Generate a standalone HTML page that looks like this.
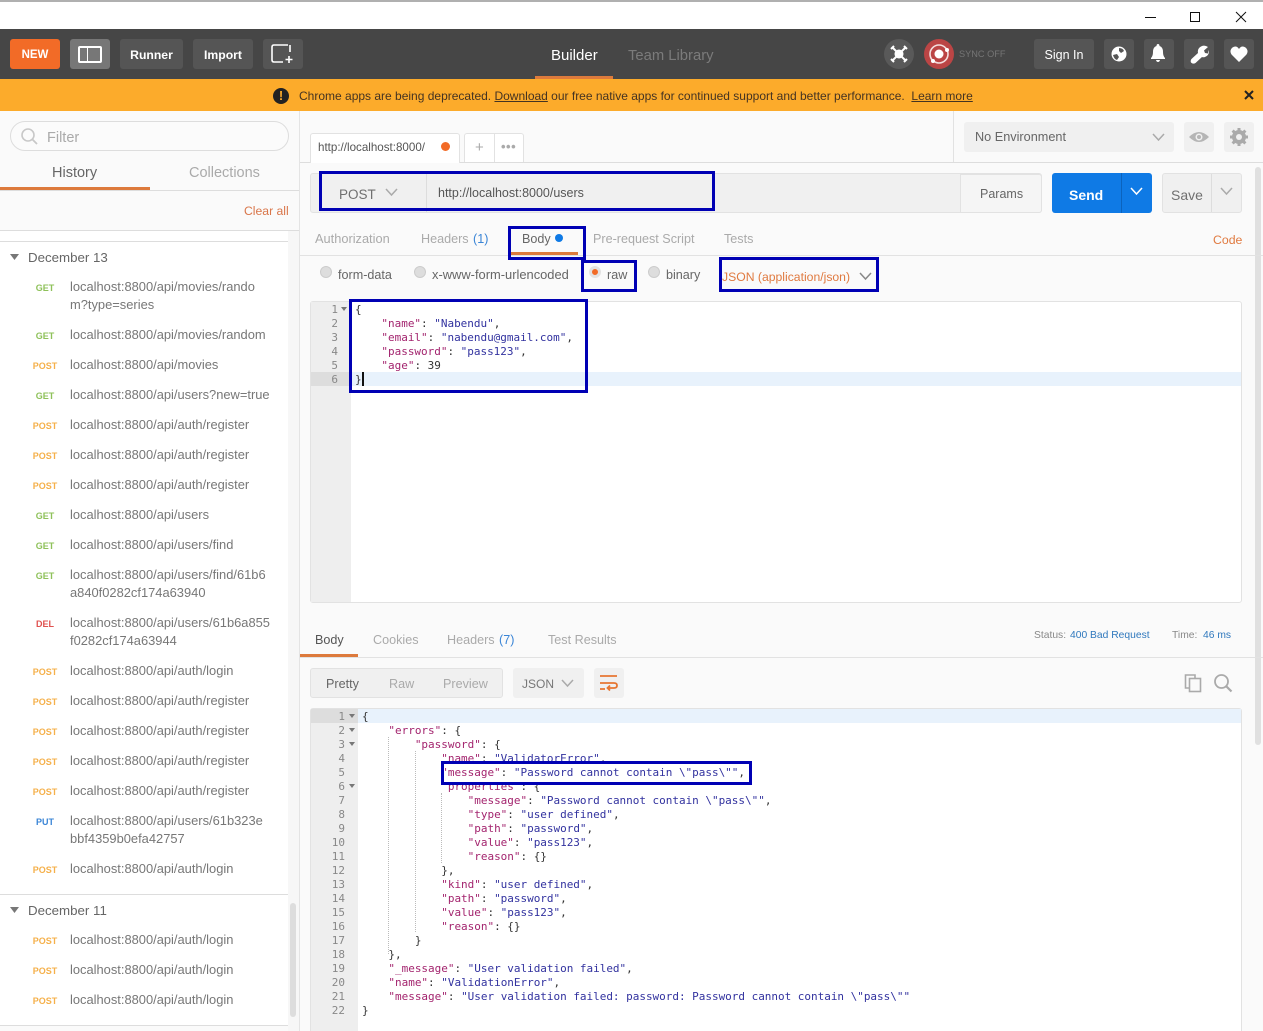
<!DOCTYPE html>
<html><head><meta charset="utf-8"><style>
html,body{margin:0;padding:0;width:1263px;height:1031px;overflow:hidden;background:#fff}
body{position:relative;font-family:"Liberation Sans",sans-serif;font-size:12.600px;color:#666}
.b{position:absolute;box-sizing:border-box}
.t{position:absolute;white-space:pre;line-height:18px}
.hb{background:#555;border-radius:3px;color:#fff;font-weight:bold;text-align:center;line-height:32px;top:39px;height:30px;font-size:12.200px}
.m{position:absolute;width:40px;left:25px;text-align:center;font-size:9px;font-weight:bold;line-height:14px;margin-top:2px}
.g{color:#8ec15a}.p{color:#f5b04a}.d{color:#e0524f}.u{color:#3a85d6}
.s{position:absolute;left:70px;white-space:pre;line-height:18px;color:#777;font-size:12.900px}
.r{position:absolute;border:3px solid #0000b4;box-sizing:border-box}
pre{position:absolute;margin:0;font-family:"DejaVu Sans Mono",monospace;font-size:11px;line-height:14px;color:#333;letter-spacing:-.02px}
i{font-style:normal;color:#a3246e}em{font-style:normal;color:#32329f}
.ln{color:#888;text-align:right}
.rad{position:absolute;width:12px;height:12px;border-radius:50%;background:#ddd;border:1px solid #ccc;box-sizing:border-box}
.dg{position:absolute;width:0;border-left:1px dotted #bbb}
</style></head><body>

<!-- title bar -->
<div class="b" style="left:0;top:0;width:1263px;height:2px;background:#b0b0b0"></div>
<div class="b" style="left:1145px;top:17px;width:11px;height:1px;background:#111"></div>
<div class="b" style="left:1190px;top:12px;width:10px;height:10px;border:1px solid #111"></div>
<svg class="b" style="left:1235px;top:11px" width="12" height="12"><path d="M1 1L11 11M11 1L1 11" stroke="#111" stroke-width="1"/></svg>

<!-- header -->
<div class="b" style="left:0;top:29px;width:1263px;height:50px;background:#464646"></div>
<div class="b hb" style="left:10px;width:50px;background:#f26b27;font-size:11.500px">NEW</div>
<div class="b hb" style="left:70px;width:40px;background:#777"></div>
<div class="b" style="left:78px;top:46px;width:24px;height:17px;border:2px solid #fff;border-radius:2px"></div>
<div class="b" style="left:87px;top:46px;width:1px;height:17px;background:#fff"></div>
<div class="b hb" style="left:120px;width:63px">Runner</div>
<div class="b hb" style="left:193px;width:60px">Import</div>
<div class="b hb" style="left:263px;width:40px"></div>
<svg class="b" style="left:270px;top:43px" width="26" height="22"><path d="M18 2H4Q2 2 2 4V17Q2 19 4 19H13M20 2V9" fill="none" stroke="#fff" stroke-width="1.6"/><path d="M19 13V20M15.500 16.500H22.500" stroke="#fff" stroke-width="1.600"/></svg>

<div class="t" style="left:551px;top:47px;color:#fff;font-size:15px">Builder</div>
<div class="b" style="left:535px;top:76px;width:78px;height:3px;background:#dd7a3c"></div>
<div class="t" style="left:628px;top:47px;color:#7b7b7b;font-size:14.800px">Team Library</div>

<div class="b" style="left:884px;top:39px;width:30px;height:30px;border-radius:50%;background:#595959"></div>
<svg class="b" style="left:889px;top:44px" width="20" height="20"><circle cx="10" cy="10" r="4.500" fill="#fff"/><path d="M2 5L5 2M3 3L17 17M15 18L18 15M2 15L5 18M3 17L17 3M15 2L18 5" stroke="#fff" stroke-width="2"/></svg>
<div class="b" style="left:924px;top:39px;width:30px;height:30px;border-radius:50%;background:#bb4545"></div>
<svg class="b" style="left:924px;top:39px" width="30" height="30"><circle cx="15" cy="15" r="9" fill="none" stroke="#f3dede" stroke-width="1.600"/><circle cx="15" cy="15" r="4.500" fill="#fff"/><circle cx="23" cy="11" r="2" fill="#fff"/><circle cx="9" cy="22" r="2" fill="#fff"/></svg>
<div class="t" style="left:959px;top:45px;color:#757575;font-size:9.200px">SYNC OFF</div>
<div class="b hb" style="left:1034px;width:60px;font-weight:normal;font-size:12.500px">Sign In</div>
<div class="b hb" style="left:1104px;width:30px"></div>
<svg class="b" style="left:1111px;top:46px" width="16" height="16"><circle cx="8" cy="8" r="7.500" fill="#fff"/><path d="M8 2Q12 2 13 5L10 7L8 5ZM2 9L6 8L8 11L6 14Q3 13 2 9Z" fill="#555"/></svg>
<div class="b hb" style="left:1144px;width:30px"></div>
<svg class="b" style="left:1149px;top:44px" width="18" height="18"><path d="M9 0Q10.500 0 10.500 2Q14 3 14 8Q14 12 16 14V15H2V14Q4 12 4 8Q4 3 7.500 2Q7.500 0 9 0ZM7 16H11Q10.500 18 9 18Q7.500 18 7 16Z" fill="#fff"/></svg>
<div class="b hb" style="left:1184px;width:30px"></div>
<svg class="b" style="left:1190px;top:45px" width="19" height="19"><path d="M12 1Q15 0 18 2L14 5.500L15 8L18 8.500L18.500 5Q20 10 15 12Q13 12.500 12 12L5.500 18Q3 19.500 1 17.500Q0 15 2 13.500L8 8Q7 3 12 1Z" fill="#fff"/></svg>
<div class="b hb" style="left:1224px;width:30px"></div>
<svg class="b" style="left:1230px;top:46px" width="18" height="16"><path d="M9 16L1.500 8.500Q-1 4.500 2.500 1.500Q6.500 -1 9 3Q11.500 -1 15.500 1.500Q19 4.500 16.500 8.500Z" fill="#fff"/></svg>

<!-- banner -->
<div class="b" style="left:0;top:79px;width:1263px;height:32px;background:#fcab2b"></div>
<div class="b" style="left:273px;top:88px;width:16px;height:16px;border-radius:50%;background:#222;color:#fcab2b;font-weight:bold;font-size:13px;line-height:16px;text-align:center">!</div>
<div class="t" style="left:299px;top:87px;color:#432;font-size:12px">Chrome apps are being deprecated. <u>Download</u> our free native apps for continued support and better performance.  <u>Learn more</u></div>
<svg class="b" style="left:1244px;top:90px" width="10" height="10"><path d="M1 1L9 9M9 1L1 9" stroke="#222" stroke-width="2"/></svg>

<!-- sidebar -->
<div class="b" style="left:0;top:111px;width:299px;height:920px;background:#fafafa"></div>
<div class="b" style="left:299px;top:111px;width:1px;height:920px;background:#e4e4e4"></div>
<div class="b" style="left:10px;top:121px;width:279px;height:30px;border:1px solid #ddd;border-radius:15px;background:#fbfbfb"></div>
<svg class="b" style="left:20px;top:127px" width="18" height="18"><circle cx="8" cy="8" r="6" fill="none" stroke="#c8c8c8" stroke-width="1.600"/><path d="M12.500 12.500L17 17" stroke="#c8c8c8" stroke-width="1.800"/></svg>
<div class="t" style="left:47px;top:129px;color:#aaa;font-size:14.500px">Filter</div>
<div class="t" style="left:52px;top:164px;color:#666;font-size:14.500px">History</div>
<div class="t" style="left:189px;top:164px;color:#aaa;font-size:14.500px">Collections</div>
<div class="b" style="left:0;top:190px;width:299px;height:1px;background:#ddd"></div>
<div class="b" style="left:0;top:187px;width:150px;height:3px;background:#dd7a3c"></div>
<div class="t" style="left:244px;top:202px;color:#d9764a;font-size:12.200px">Clear all</div>
<div class="b" style="left:0;top:230px;width:299px;height:1px;background:#ddd"></div>

<div class="b" style="left:0;top:231px;width:288px;height:794px;background:#fff"></div>
<div class="b" style="left:288px;top:231px;width:11px;height:800px;background:#f7f7f7"></div>
<div class="b" style="left:290px;top:903px;width:6px;height:114px;background:#ddd;border-radius:3px"></div>
<div class="b" style="left:0;top:241px;width:288px;height:1px;background:#ddd"></div>
<div class="b" style="left:0;top:894px;width:288px;height:1px;background:#ddd"></div>
<div class="b" style="left:0;top:1025px;width:288px;height:1px;background:#ddd"></div>
<svg class="b" style="left:10px;top:254px" width="9" height="7"><path d="M0 0H9L4.500 6Z" fill="#777"/></svg>
<div class="t" style="left:28px;top:249px;color:#666;font-size:13.300px">December 13</div>
<svg class="b" style="left:10px;top:907px" width="9" height="7"><path d="M0 0H9L4.500 6Z" fill="#777"/></svg>
<div class="t" style="left:28px;top:902px;color:#666;font-size:13.300px">December 11</div>

<div class="m g" style="top:279px">GET</div><div class="s" style="top:278px">localhost:8800/api/movies/rando
m?type=series</div>
<div class="m g" style="top:327px">GET</div><div class="s" style="top:326px">localhost:8800/api/movies/random</div>
<div class="m p" style="top:357px">POST</div><div class="s" style="top:356px">localhost:8800/api/movies</div>
<div class="m g" style="top:387px">GET</div><div class="s" style="top:386px">localhost:8800/api/users?new=true</div>
<div class="m p" style="top:417px">POST</div><div class="s" style="top:416px">localhost:8800/api/auth/register</div>
<div class="m p" style="top:447px">POST</div><div class="s" style="top:446px">localhost:8800/api/auth/register</div>
<div class="m p" style="top:477px">POST</div><div class="s" style="top:476px">localhost:8800/api/auth/register</div>
<div class="m g" style="top:507px">GET</div><div class="s" style="top:506px">localhost:8800/api/users</div>
<div class="m g" style="top:537px">GET</div><div class="s" style="top:536px">localhost:8800/api/users/find</div>
<div class="m g" style="top:567px">GET</div><div class="s" style="top:566px">localhost:8800/api/users/find/61b6
a840f0282cf174a63940</div>
<div class="m d" style="top:615px">DEL</div><div class="s" style="top:614px">localhost:8800/api/users/61b6a855
f0282cf174a63944</div>
<div class="m p" style="top:663px">POST</div><div class="s" style="top:662px">localhost:8800/api/auth/login</div>
<div class="m p" style="top:693px">POST</div><div class="s" style="top:692px">localhost:8800/api/auth/register</div>
<div class="m p" style="top:723px">POST</div><div class="s" style="top:722px">localhost:8800/api/auth/register</div>
<div class="m p" style="top:753px">POST</div><div class="s" style="top:752px">localhost:8800/api/auth/register</div>
<div class="m p" style="top:783px">POST</div><div class="s" style="top:782px">localhost:8800/api/auth/register</div>
<div class="m u" style="top:813px">PUT</div><div class="s" style="top:812px">localhost:8800/api/users/61b323e
bbf4359b0efa42757</div>
<div class="m p" style="top:861px">POST</div><div class="s" style="top:860px">localhost:8800/api/auth/login</div>
<div class="m p" style="top:932px">POST</div><div class="s" style="top:931px">localhost:8800/api/auth/login</div>
<div class="m p" style="top:962px">POST</div><div class="s" style="top:961px">localhost:8800/api/auth/login</div>
<div class="m p" style="top:992px">POST</div><div class="s" style="top:991px">localhost:8800/api/auth/login</div>

<!-- main -->
<div class="b" style="left:300px;top:111px;width:963px;height:920px;background:#fafafa"></div>
<div class="b" style="left:953px;top:111px;width:1px;height:51px;background:#e2e2e2"></div>
<div class="b" style="left:300px;top:162px;width:963px;height:1px;background:#ddd"></div>
<div class="b" style="left:310px;top:133px;width:150px;height:30px;background:#fff;border:1px solid #e2e2e2;border-bottom:0;border-radius:3px 3px 0 0"></div>
<div class="t" style="left:318px;top:139px;font-size:11.600px;color:#555">http://localhost:8000/</div>
<div class="b" style="left:441px;top:142px;width:9px;height:9px;border-radius:50%;background:#f26b27"></div>
<div class="b" style="left:464px;top:133px;width:60px;height:29px;background:#fff;border:1px solid #e2e2e2;border-bottom:0;border-radius:3px 3px 0 0"></div>
<div class="b" style="left:494px;top:133px;width:1px;height:29px;background:#e2e2e2"></div>
<div class="t" style="left:475px;top:139px;color:#aaa;font-size:15px">+</div>
<div class="t" style="left:501px;top:138px;color:#aaa;font-size:13px;letter-spacing:.5px;font-weight:bold">•••</div>
<div class="b" style="left:964px;top:122px;width:210px;height:30px;background:#f0f0f0;border-radius:3px"></div>
<div class="t" style="left:975px;top:128px;color:#666;font-size:12.700px">No Environment</div>
<svg class="b" style="left:1152px;top:133px" width="13" height="8"><path d="M1 1L6.500 7L12 1" fill="none" stroke="#aaa" stroke-width="1.500"/></svg>
<div class="b" style="left:1184px;top:122px;width:30px;height:30px;background:#f0f0f0;border-radius:3px"></div>
<svg class="b" style="left:1188px;top:130px" width="22" height="14"><path d="M1 7Q11 -3 21 7Q11 17 1 7Z" fill="#b5b5b5"/><circle cx="11" cy="7" r="3.500" fill="#f0f0f0"/><circle cx="11" cy="7" r="2" fill="#b5b5b5"/></svg>
<div class="b" style="left:1224px;top:122px;width:30px;height:30px;background:#f0f0f0;border-radius:3px"></div>
<svg class="b" style="left:1229px;top:127px" width="20" height="20"><circle cx="10" cy="10" r="5" fill="none" stroke="#aaa" stroke-width="4"/><path d="M10 1V19M1 10H19M3.600 3.600L16.400 16.400M16.400 3.600L3.600 16.400" stroke="#aaa" stroke-width="3"/><circle cx="10" cy="10" r="3" fill="#f0f0f0"/></svg>

<div class="b" style="left:1255px;top:167px;width:6px;height:578px;background:#e0e0e0;border-radius:3px"></div>

<!-- url bar -->
<div class="b" style="left:310px;top:173px;width:732px;height:40px;background:#f0f0f0;border:1px solid #e2e2e2;border-radius:3px"></div>
<div class="b" style="left:426px;top:174px;width:1px;height:38px;background:#ddd"></div>
<div class="b" style="left:960px;top:174px;width:82px;height:39px;background:#f5f5f5;border:1px solid #e2e2e2;border-radius:0 3px 3px 0"></div>
<div class="t" style="left:339px;top:186px;font-size:13.500px;color:#707070">POST</div>
<svg class="b" style="left:385px;top:188px" width="13" height="9"><path d="M1 1L6.500 7L12 1" fill="none" stroke="#aaa" stroke-width="1.500"/></svg>
<div class="t" style="left:438px;top:184px;font-size:12.500px;color:#555">http://localhost:8000/users</div>
<div class="t" style="left:980px;top:185px;font-size:12.500px;color:#666">Params</div>
<div class="b" style="left:1052px;top:173px;width:100px;height:40px;background:#0f7ae5;border-radius:3px"></div>
<div class="b" style="left:1121px;top:173px;width:1px;height:40px;background:#0b63bd"></div>
<div class="t" style="left:1069px;top:186px;font-size:14px;font-weight:bold;color:#fff">Send</div>
<svg class="b" style="left:1130px;top:187px" width="13" height="9"><path d="M1 1L6.500 7L12 1" fill="none" stroke="#fff" stroke-width="1.500"/></svg>
<div class="b" style="left:1162px;top:173px;width:80px;height:40px;background:#f0f0f0;border:1px solid #e2e2e2;border-radius:3px"></div>
<div class="b" style="left:1211px;top:174px;width:1px;height:38px;background:#ddd"></div>
<div class="t" style="left:1171px;top:186px;font-size:14px;color:#707070">Save</div>
<svg class="b" style="left:1220px;top:187px" width="13" height="9"><path d="M1 1L6.500 7L12 1" fill="none" stroke="#aaa" stroke-width="1.500"/></svg>

<!-- request tabs -->
<div class="b" style="left:300px;top:255px;width:963px;height:1px;background:#e2e2e2"></div>
<div class="t" style="left:315px;top:230px;color:#aaa;font-size:12.800px">Authorization</div>
<div class="t" style="left:421px;top:230px;color:#aaa">Headers</div><div class="t" style="left:473px;top:230px;color:#3a85d6">(1)</div>
<div class="t" style="left:522px;top:230px;color:#666">Body</div>
<div class="b" style="left:555px;top:234px;width:8px;height:8px;border-radius:50%;background:#0f7ae5"></div>
<div class="b" style="left:510px;top:252px;width:68px;height:3px;background:#dd7a3c"></div>
<div class="t" style="left:593px;top:230px;color:#aaa">Pre-request Script</div>
<div class="t" style="left:724px;top:230px;color:#aaa">Tests</div>
<div class="t" style="left:1213px;top:231px;color:#e07a40;font-size:12.300px">Code</div>

<div class="rad" style="left:320px;top:266px"></div>
<div class="t" style="left:338px;top:266px;color:#666">form-data</div>
<div class="rad" style="left:414px;top:266px"></div>
<div class="t" style="left:432px;top:266px;color:#666;font-size:12.900px">x-www-form-urlencoded</div>
<div class="rad" style="left:589px;top:266px;border:3px solid #e3e3e3;background:#f26b27"></div>
<div class="t" style="left:607px;top:266px;color:#666">raw</div>
<div class="rad" style="left:648px;top:266px"></div>
<div class="t" style="left:666px;top:266px;color:#666">binary</div>
<div class="t" style="left:722px;top:268px;color:#e07a40;font-size:12.200px">JSON (application/json)</div>
<svg class="b" style="left:859px;top:272px" width="13" height="9"><path d="M1 1L6.500 7L12 1" fill="none" stroke="#888" stroke-width="1.500"/></svg>

<!-- request editor -->
<div class="b" style="left:310px;top:301px;width:932px;height:302px;background:#fff;border:1px solid #e2e2e2;border-radius:3px"></div>
<div class="b" style="left:311px;top:302px;width:40px;height:300px;background:#eee"></div>
<div class="b" style="left:351px;top:372px;width:890px;height:14px;background:#e8f2fc"></div>
<div class="b" style="left:311px;top:372px;width:40px;height:14px;background:#ddd"></div>
<pre class="ln" style="left:311px;top:303px;width:27px">1
2
3
4
5
6</pre>
<svg class="b" style="left:341px;top:307px" width="6" height="4"><path d="M0 0H6L3 4Z" fill="#777"/></svg>
<pre style="left:355px;top:303px">{
    <i>"name"</i>: <em>"Nabendu"</em>,
    <i>"email"</i>: <em>"nabendu@gmail.com"</em>,
    <i>"password"</i>: <em>"pass123"</em>,
    <i>"age"</i>: 39
}</pre>
<div class="b" style="left:362px;top:372px;width:2px;height:14px;background:#111"></div>

<!-- response -->
<div class="b" style="left:300px;top:657px;width:963px;height:1px;background:#e2e2e2"></div>
<div class="t" style="left:315px;top:631px;color:#555">Body</div>
<div class="b" style="left:300px;top:654px;width:58px;height:3px;background:#dd7a3c"></div>
<div class="t" style="left:373px;top:631px;color:#aaa">Cookies</div>
<div class="t" style="left:447px;top:631px;color:#aaa">Headers</div><div class="t" style="left:499px;top:631px;color:#3a85d6">(7)</div>
<div class="t" style="left:548px;top:631px;color:#aaa">Test Results</div>
<div class="t" style="left:1034px;top:627px;font-size:10.300px;color:#888">Status:</div><div class="t" style="left:1070px;top:627px;font-size:10.300px;color:#2f78bd">400 Bad Request</div>
<div class="t" style="left:1172px;top:627px;font-size:10.300px;color:#888">Time:</div><div class="t" style="left:1203px;top:627px;font-size:10.300px;color:#2f78bd">46 ms</div>

<div class="b" style="left:310px;top:668px;width:193px;height:30px;background:#f0f0f0;border:1px solid #e2e2e2;border-radius:3px"></div>
<div class="t" style="left:326px;top:675px;color:#666">Pretty</div>
<div class="t" style="left:389px;top:675px;color:#aaa">Raw</div>
<div class="t" style="left:443px;top:675px;color:#aaa">Preview</div>
<div class="b" style="left:513px;top:668px;width:71px;height:30px;background:#f0f0f0;border-radius:3px"></div>
<div class="t" style="left:522px;top:675px;color:#777;font-size:12px">JSON</div>
<svg class="b" style="left:561px;top:679px" width="13" height="9"><path d="M1 1L6.500 7L12 1" fill="none" stroke="#aaa" stroke-width="1.500"/></svg>
<div class="b" style="left:594px;top:668px;width:30px;height:30px;background:#f0f0f0;border-radius:3px"></div>
<svg class="b" style="left:599px;top:674px" width="20" height="18"><path d="M1 2H18M1 9H15Q18 9 18 11.500Q18 14 15 14H9M1 15H6M11 11.500L8.500 14L11 16.500" fill="none" stroke="#e67632" stroke-width="1.800"/></svg>
<svg class="b" style="left:1184px;top:673px" width="18" height="20"><path d="M5 15H1.500V2H11V5" fill="none" stroke="#aaa" stroke-width="1.600"/><rect x="5.500" y="5.500" width="11" height="13" fill="none" stroke="#aaa" stroke-width="1.600"/></svg>
<svg class="b" style="left:1213px;top:673px" width="20" height="20"><circle cx="8.500" cy="8.500" r="6.500" fill="none" stroke="#aaa" stroke-width="1.800"/><path d="M13 13L18.500 18.500" stroke="#aaa" stroke-width="2.200"/></svg>

<div class="b" style="left:310px;top:708px;width:932px;height:330px;background:#fff;border:1px solid #e2e2e2;border-radius:3px"></div>
<div class="b" style="left:311px;top:709px;width:47px;height:322px;background:#eee"></div>
<div class="b" style="left:358px;top:709px;width:883px;height:14px;background:#e8f2fc"></div>
<div class="b" style="left:311px;top:709px;width:47px;height:14px;background:#ddd"></div>
<div class="dg" style="left:388px;top:737px;height:217px"></div>
<div class="dg" style="left:415px;top:751px;height:181px"></div>
<div class="dg" style="left:441px;top:793px;height:70px"></div>
<pre class="ln" style="left:311px;top:710px;width:34px">1
2
3
4
5
6
7
8
9
10
11
12
13
14
15
16
17
18
19
20
21
22</pre>
<svg class="b" style="left:349px;top:714px" width="6" height="4"><path d="M0 0H6L3 4Z" fill="#777"/></svg>
<svg class="b" style="left:349px;top:728px" width="6" height="4"><path d="M0 0H6L3 4Z" fill="#777"/></svg>
<svg class="b" style="left:349px;top:742px" width="6" height="4"><path d="M0 0H6L3 4Z" fill="#777"/></svg>
<svg class="b" style="left:349px;top:784px" width="6" height="4"><path d="M0 0H6L3 4Z" fill="#777"/></svg>
<pre style="left:362px;top:710px">{
    <i>"errors"</i>: {
        <i>"password"</i>: {
            <i>"name"</i>: <em>"ValidatorError"</em>,
            <i>"message"</i>: <em>"Password cannot contain \"pass\""</em>,
            <i>"properties"</i>: {
                <i>"message"</i>: <em>"Password cannot contain \"pass\""</em>,
                <i>"type"</i>: <em>"user defined"</em>,
                <i>"path"</i>: <em>"password"</em>,
                <i>"value"</i>: <em>"pass123"</em>,
                <i>"reason"</i>: {}
            },
            <i>"kind"</i>: <em>"user defined"</em>,
            <i>"path"</i>: <em>"password"</em>,
            <i>"value"</i>: <em>"pass123"</em>,
            <i>"reason"</i>: {}
        }
    },
    <i>"_message"</i>: <em>"User validation failed"</em>,
    <i>"name"</i>: <em>"ValidationError"</em>,
    <i>"message"</i>: <em>"User validation failed: password: Password cannot contain \"pass\""</em>
}</pre>

<!-- annotation rectangles -->
<div class="r" style="left:319px;top:171px;width:396px;height:40px"></div>
<div class="r" style="left:508px;top:226px;width:78px;height:34px"></div>
<div class="r" style="left:581px;top:260px;width:56px;height:32px"></div>
<div class="r" style="left:719px;top:257px;width:160px;height:35px"></div>
<div class="r" style="left:349px;top:299px;width:239px;height:94px"></div>
<div class="r" style="left:441px;top:761px;width:311px;height:24px"></div>
</body></html>
